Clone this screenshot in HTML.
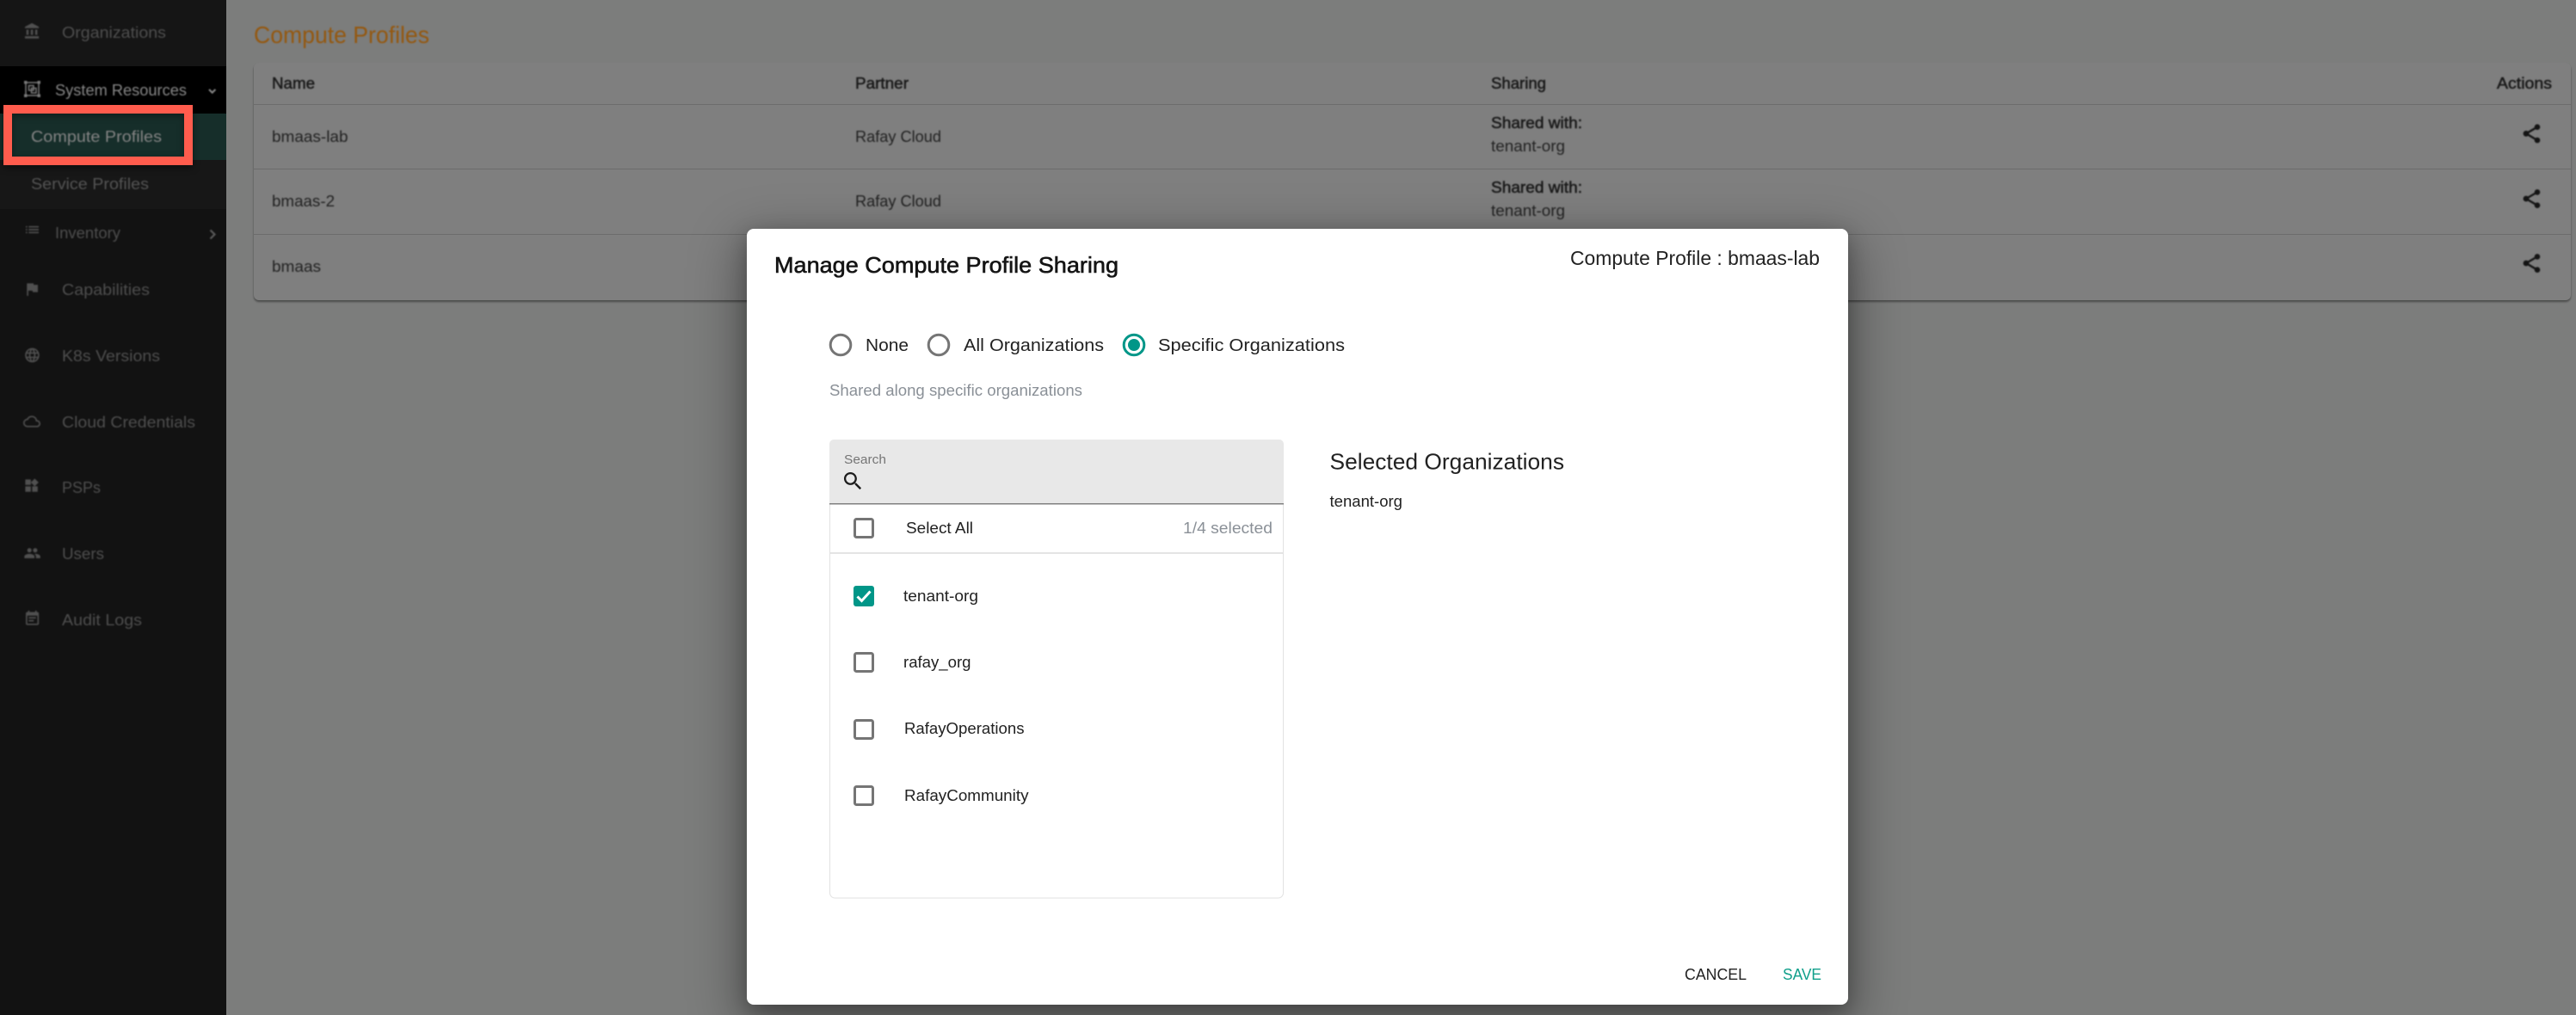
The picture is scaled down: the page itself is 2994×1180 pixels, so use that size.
<!DOCTYPE html>
<html><head><meta charset="utf-8"><title>Compute Profiles</title>
<style>
html,body{margin:0;padding:0;width:2994px;height:1180px;overflow:hidden;background:#7c7d7c}
body{position:relative;font-family:"Liberation Sans",sans-serif}
svg{position:absolute;left:0;top:0}
svg text{font-family:"Liberation Sans",sans-serif}
.back{filter:blur(.7px)}
.front{filter:blur(.35px)}
.redbox{position:absolute;left:4px;top:122px;width:200px;height:50px;border:10px solid #ff5c4d;box-shadow:0 3px 8px rgba(0,0,0,.45),inset 0 3px 8px rgba(0,0,0,.35)}
.card{position:absolute;left:295px;top:73px;width:2693px;height:276px;background:#7f7f7f;border-radius:6px;box-shadow:0 2px 2px rgba(0,0,0,.4)}
.modal{position:absolute;left:868px;top:266px;width:1280px;height:902px;background:#fff;border-radius:8px;box-shadow:0 20px 60px 10px rgba(0,0,0,.32),0 8px 24px rgba(0,0,0,.25)}
</style></head><body>
<div class="card"></div>
<svg width="2994" height="1180" viewBox="0 0 2994 1180">
<rect x="0" y="0" width="263" height="1180" fill="#121212"/>
<rect x="0" y="0" width="263" height="77" fill="#151515"/>
<rect x="0" y="77" width="263" height="55" fill="#000"/>
<rect x="0" y="132" width="263" height="54" fill="#162e2a"/>
<rect x="0" y="186" width="263" height="57" fill="#171717"/>
<g fill="#6c6c6c">
<rect x="295" y="121" width="2693" height="1"/>
<rect x="295" y="196" width="2693" height="1"/>
<rect x="295" y="272" width="2693" height="1"/>
</g>
</svg>
<svg class="back" width="2994" height="1180" viewBox="0 0 2994 1180">
<defs>
<g id="share">
<circle cx="2949" cy="-7.600" r="3.300"/>
<circle cx="2949" cy="7.700" r="3.300"/>
<circle cx="2936" cy="0" r="3.400"/>
<path d="M2949 -7.600L2936 0L2949 7.700" fill="none" stroke="#141414" stroke-width="2.400"/>
</g>
</defs>
<g font-size="18.500" fill="#4e4e4e">
<text x="72" y="44" textLength="121" lengthAdjust="spacingAndGlyphs">Organizations</text>
<text x="64" y="111" textLength="153" lengthAdjust="spacingAndGlyphs" fill="#868686">System Resources</text>
<text x="36" y="165" textLength="152" lengthAdjust="spacingAndGlyphs" fill="#848484">Compute Profiles</text>
<text x="36" y="220" textLength="137" lengthAdjust="spacingAndGlyphs" fill="#545454">Service Profiles</text>
<text x="64" y="277" textLength="76" lengthAdjust="spacingAndGlyphs">Inventory</text>
<text x="72" y="343" textLength="102" lengthAdjust="spacingAndGlyphs">Capabilities</text>
<text x="72" y="420" textLength="114" lengthAdjust="spacingAndGlyphs">K8s Versions</text>
<text x="72" y="497" textLength="155" lengthAdjust="spacingAndGlyphs">Cloud Credentials</text>
<text x="72" y="573" textLength="45" lengthAdjust="spacingAndGlyphs">PSPs</text>
<text x="72" y="650" textLength="49" lengthAdjust="spacingAndGlyphs">Users</text>
<text x="72" y="727" textLength="93" lengthAdjust="spacingAndGlyphs">Audit Logs</text>
</g>
<g fill="#505050">
<path transform="translate(27.300 26) scale(.85)" d="M4 10v7h3v-7H4zm6 0v7h3v-7h-3zM2 22h19v-3H2v3zm14-12v7h3v-7h-3zm-4.500-9L2 6v2h19V6l-9.500-5z"/>
<path transform="translate(27.500 257) scale(.833)" d="M3 13h2v-2H3v2zm0 4h2v-2H3v2zm0-8h2V7H3v2zm4 4h14v-2H7v2zm0 4h14v-2H7v2zM7 7v2h14V7H7z"/>
<path transform="translate(27 326) scale(.85)" d="M14.400 6L14 4H5v17h2v-7h5.600l.4 2h7V6z"/>
<path transform="translate(27.500 403) scale(.83)" d="M11.990 2C6.470 2 2 6.480 2 12s4.470 10 9.990 10C17.520 22 22 17.520 22 12S17.520 2 11.990 2zm6.930 6h-2.950c-.32-1.250-.78-2.450-1.380-3.560 1.840.63 3.370 1.910 4.330 3.560zM12 4.040c.83 1.200 1.480 2.530 1.910 3.960h-3.820c.43-1.430 1.080-2.760 1.910-3.960zM4.260 14C4.100 13.360 4 12.690 4 12s.1-1.360.26-2h3.380c-.08.66-.14 1.320-.14 2 0 .68.06 1.340.14 2H4.260zm.82 2h2.950c.32 1.250.78 2.450 1.380 3.560-1.840-.63-3.370-1.900-4.330-3.560zm2.950-8H5.080c.96-1.660 2.490-2.930 4.330-3.560C8.810 5.550 8.350 6.750 8.030 8zM12 19.960c-.83-1.200-1.480-2.530-1.910-3.960h3.820c-.43 1.430-1.080 2.760-1.910 3.960zM14.340 14H9.660c-.09-.66-.16-1.320-.16-2 0-.68.07-1.350.16-2h4.680c.09.65.16 1.320.16 2 0 .68-.07 1.340-.16 2zm.25 5.560c.6-1.110 1.060-2.310 1.380-3.560h2.950c-.96 1.650-2.490 2.930-4.330 3.560zM16.360 14c.08-.66.14-1.320.14-2 0-.68-.06-1.340-.14-2h3.380c.16.64.26 1.310.26 2s-.1 1.360-.26 2h-3.380z"/>
<path transform="translate(27 480) scale(.833)" d="M19.350 10.040C18.670 6.590 15.640 4 12 4 9.110 4 6.600 5.640 5.350 8.040 2.340 8.360 0 10.910 0 14c0 3.310 2.690 6 6 6h13c2.760 0 5-2.240 5-5 0-2.640-2.050-4.780-4.650-4.960zM19 18H6c-2.210 0-4-1.790-4-4s1.790-4 4-4h.71C7.370 7.690 9.480 6 12 6c3.040 0 5.500 2.460 5.500 5.500v.5H19c1.660 0 3 1.340 3 3s-1.340 3-3 3z"/>
<path transform="translate(27 555) scale(.8)" d="M13 13v8h8v-8h-8zM3 21h8v-8H3v8zM3 3v8h8V3H3zm13.660-1.310L11 7.340 16.660 13l5.660-5.660-5.660-5.650z"/>
<path transform="translate(27.500 633) scale(.84)" d="M16 11c1.660 0 2.990-1.340 2.990-3S17.660 5 16 5c-1.660 0-3 1.340-3 3s1.340 3 3 3zm-8 0c1.660 0 2.990-1.340 2.990-3S9.660 5 8 5C6.340 5 5 6.340 5 8s1.340 3 3 3zm0 2c-2.330 0-7 1.170-7 3.500V19h14v-2.500c0-2.330-4.670-3.500-7-3.500zm8 0c-.29 0-.62.02-.97.05 1.160.84 1.970 1.970 1.970 3.450V19h6v-2.500c0-2.330-4.670-3.500-7-3.500z"/>
<path transform="translate(27.500 709) scale(.84)" d="M17 10H7v2h10v-2zm2-7h-1V1h-2v2H8V1H6v2H5c-1.110 0-1.990.9-1.990 2L3 19c0 1.100.89 2 2 2h14c1.100 0 2-.9 2-2V5c0-1.100-.9-2-2-2zm0 16H5V8h14v11zm-5-5H7v2h7v-2z"/>
</g>
<!-- system resources icon -->
<g fill="none" stroke="#7a7a7a" stroke-width="1.500">
<rect x="30" y="96" width="15" height="15"/>
<rect x="33.500" y="99.500" width="5.500" height="5.500"/>
<rect x="36.500" y="102.500" width="5.500" height="5.500"/>
</g>
<g fill="#7a7a7a"><rect x="28" y="94" width="3.500" height="3.500"/><rect x="43.500" y="94" width="3.500" height="3.500"/><rect x="28" y="109.500" width="3.500" height="3.500"/><rect x="43.500" y="109.500" width="3.500" height="3.500"/></g>
<path d="M243 104l3.700 3.700 3.700-3.700" fill="none" stroke="#8a8a8a" stroke-width="2"/>
<path d="M244.500 267.500l5 5-5 5" fill="none" stroke="#5a5a5a" stroke-width="2.200"/>
<!-- main -->
<text x="295" y="50" font-size="28" fill="#945810" textLength="204" lengthAdjust="spacingAndGlyphs">Compute Profiles</text>
<g font-size="18" fill="#1a1a1a" stroke="#1a1a1a" stroke-width=".5">
<text x="316" y="103" textLength="50" lengthAdjust="spacingAndGlyphs">Name</text>
<text x="994" y="103" textLength="62" lengthAdjust="spacingAndGlyphs">Partner</text>
<text x="1733" y="103" textLength="64" lengthAdjust="spacingAndGlyphs">Sharing</text>
<text x="2902" y="103" textLength="64" lengthAdjust="spacingAndGlyphs">Actions</text>
<text x="1733" y="149" textLength="106" lengthAdjust="spacingAndGlyphs">Shared with:</text>
<text x="1733" y="224" textLength="106" lengthAdjust="spacingAndGlyphs">Shared with:</text>
</g>
<g font-size="18" fill="#222">
<text x="316" y="165" textLength="88.500" lengthAdjust="spacingAndGlyphs">bmaas-lab</text>
<text x="316" y="240" textLength="73" lengthAdjust="spacingAndGlyphs">bmaas-2</text>
<text x="316" y="316" textLength="57" lengthAdjust="spacingAndGlyphs">bmaas</text>
<text x="994" y="165" textLength="100" lengthAdjust="spacingAndGlyphs">Rafay Cloud</text>
<text x="994" y="240" textLength="100" lengthAdjust="spacingAndGlyphs">Rafay Cloud</text>
<text x="1733" y="176" textLength="86" lengthAdjust="spacingAndGlyphs">tenant-org</text>
<text x="1733" y="251" textLength="86" lengthAdjust="spacingAndGlyphs">tenant-org</text>
</g>
<g fill="#141414">
<use href="#share" transform="translate(0 155.300)"/>
<use href="#share" transform="translate(0 231)"/>
<use href="#share" transform="translate(0 306)"/>
</g>
</svg>
<div class="redbox"></div>
<div class="modal"></div>
<svg class="front" width="2994" height="1180" viewBox="0 0 2994 1180">
<text x="900" y="317" font-size="26" fill="#141414" stroke="#141414" stroke-width=".6" textLength="400" lengthAdjust="spacingAndGlyphs">Manage Compute Profile Sharing</text>
<text x="1825" y="308" font-size="23" fill="#222" textLength="290" lengthAdjust="spacingAndGlyphs">Compute Profile : bmaas-lab</text>
<!-- radios -->
<g fill="none" stroke="#757575" stroke-width="3">
<circle cx="977" cy="401" r="11.800"/>
<circle cx="1091" cy="401" r="11.800"/>
</g>
<circle cx="1318" cy="401" r="11.800" fill="none" stroke="#009688" stroke-width="3"/>
<circle cx="1318" cy="401" r="7" fill="#009688"/>
<g font-size="20" fill="#222">
<text x="1006" y="408" textLength="50" lengthAdjust="spacingAndGlyphs">None</text>
<text x="1120" y="408" textLength="163" lengthAdjust="spacingAndGlyphs">All Organizations</text>
<text x="1346" y="408" textLength="217" lengthAdjust="spacingAndGlyphs">Specific Organizations</text>
</g>
<text x="964" y="460" font-size="18" fill="#8a9097" textLength="294" lengthAdjust="spacingAndGlyphs">Shared along specific organizations</text>
<!-- list card -->
<rect x="964.500" y="520" width="527" height="524" rx="6" fill="#fff" stroke="#e2e2e2" stroke-width="1"/>
<path d="M964 586V516a5 5 0 0 1 5-5h518a5 5 0 0 1 5 5v70z" fill="#e8e8e8"/>
<rect x="964" y="585" width="528" height="1.500" fill="#808080"/>
<rect x="965" y="642" width="526" height="2" fill="#e4e4e4"/>
<text x="981" y="539" font-size="15" fill="#757575" textLength="49" lengthAdjust="spacingAndGlyphs">Search</text>
<path transform="translate(977.500 545.500) scale(1.150)" fill="#1c1c1c" d="M15.500 14h-.79l-.28-.27C15.410 12.590 16 11.110 16 9.500 16 5.910 13.090 3 9.500 3S3 5.910 3 9.500 5.910 16 9.500 16c1.610 0 3.090-.59 4.230-1.570l.27.28v.79l5 4.990L20.490 19l-4.990-5zm-6 0C7.010 14 5 11.990 5 9.500S7.010 5 9.500 5 14 7.010 14 9.500 11.990 14 9.500 14z"/>
<!-- checkboxes -->
<g fill="none" stroke="#757575" stroke-width="3">
<rect x="993.500" y="603.500" width="21" height="21" rx="2"/>
<rect x="993.500" y="759.500" width="21" height="21" rx="2"/>
<rect x="993.500" y="837.500" width="21" height="21" rx="2"/>
<rect x="993.500" y="914.500" width="21" height="21" rx="2"/>
</g>
<rect x="992" y="681" width="24" height="24" rx="3" fill="#009688"/>
<path d="M996.500 693.500l5 5 10-11" fill="none" stroke="#fff" stroke-width="3"/>
<g font-size="18" fill="#222">
<text x="1053" y="620" textLength="78" lengthAdjust="spacingAndGlyphs">Select All</text>
<text x="1050" y="699" textLength="87" lengthAdjust="spacingAndGlyphs">tenant-org</text>
<text x="1050" y="776" textLength="78.500" lengthAdjust="spacingAndGlyphs">rafay_org</text>
<text x="1051" y="853" textLength="139.500" lengthAdjust="spacingAndGlyphs">RafayOperations</text>
<text x="1051" y="931" textLength="144.500" lengthAdjust="spacingAndGlyphs">RafayCommunity</text>
<text x="1545.500" y="589" textLength="84.500" lengthAdjust="spacingAndGlyphs">tenant-org</text>
</g>
<text x="1375" y="620" font-size="18" fill="#8a9097" textLength="104" lengthAdjust="spacingAndGlyphs">1/4 selected</text>
<text x="1545.500" y="545.500" font-size="26" fill="#222" textLength="272.500" lengthAdjust="spacingAndGlyphs">Selected Organizations</text>
<text x="1958" y="1139" font-size="18" fill="#222" textLength="72" lengthAdjust="spacingAndGlyphs">CANCEL</text>
<text x="2072" y="1139" font-size="18" fill="#0f9f8a" textLength="45" lengthAdjust="spacingAndGlyphs">SAVE</text>
</svg>
</body></html>
